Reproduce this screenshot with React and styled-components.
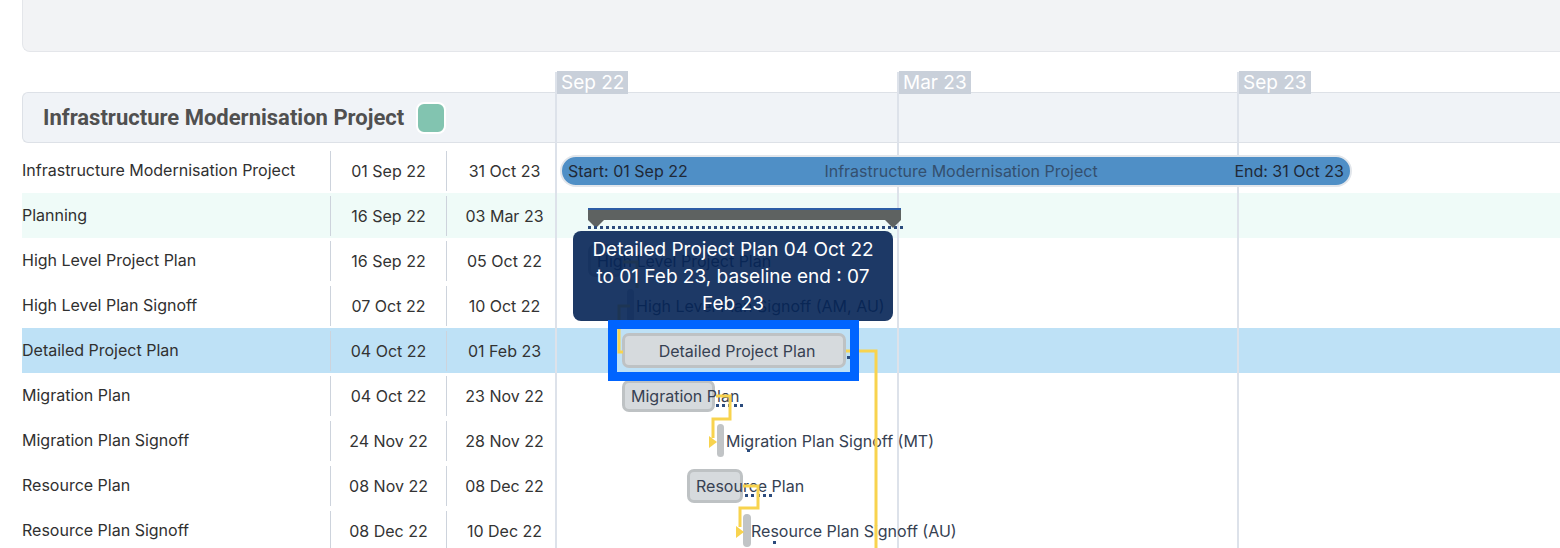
import React from "react"
import styled, { createGlobalStyle } from "styled-components"

// chart canvas origin on the page: the Sep 22 gridline and the top of the scale labels
const X0 = 556
const Y0 = 72

const GlobalStyle = createGlobalStyle`
  html, body {
    margin: 0;
    padding: 0;
    background: #fff;
  }
  body {
    font-family: Inter, "Noto Sans", sans-serif;
    color: #303030;
    overflow: hidden;
  }
`

const Page = styled.div`
  width: 1560px;
  height: 548px;
  overflow: hidden;
  padding-left: 22px;
  box-sizing: border-box;
`

const FilterPanel = styled.div`
  height: 52px;
  margin-right: -12px;
  box-sizing: border-box;
  background: #f2f3f5;
  border: 1px solid #e4e6ea;
  border-top: none;
  border-right: none;
  border-bottom-left-radius: 8px;
`

const Gantt = styled.section`
  position: relative;
  margin-top: 40px;
`

const GroupHeader = styled.div`
  height: 51px;
  box-sizing: border-box;
  margin-right: -12px;
  display: flex;
  align-items: center;
  gap: 12px;
  padding-left: 20px;
  background: #f0f3f7;
  border: 1px solid #dde1e7;
  border-right: none;
  border-radius: 6px 0 0 6px;
`

const Title = styled.h2`
  margin: 0;
  font-family: Roboto, Inter, sans-serif;
  font-weight: 700;
  font-size: 22px;
  color: #505050;
`

const Badge = styled.span`
  width: 26px;
  height: 28px;
  border-radius: 8px;
  background: #82c4b0;
  border: 2px solid #fff;
`

/* scale: gridlines and month labels, painted over the row backgrounds */
const Scale = styled.div`
  position: absolute;
  left: ${X0 - 22}px;
  top: -20px;
  right: 0;
  bottom: 0;
`

const GridLine = styled.div`
  position: absolute;
  top: 0;
  bottom: 0;
  width: 2px;
  left: ${(p) => p.$x - 1}px;
  background: #dde2ea;
`

const ScaleLabel = styled.span`
  position: absolute;
  top: -1px;
  left: ${(p) => p.$x + 1}px;
  padding: 0 4px;
  height: 23px;
  line-height: 23px;
  background: #c9d0da;
  color: #fff;
  font-size: 19px;
`

const Rows = styled.div`
  margin-top: 5px;
  margin-right: -12px;
`

const rowTones = {
  plain: "transparent",
  summary: "#effbf8",
  selected: "#bee1f6",
}

const Row = styled.div`
  display: grid;
  grid-template-columns: 308px 116px 110px 1fr;
  height: 45px;
  background: ${(p) => rowTones[p.$tone]};
  font-size: 16px;
`

const NameCell = styled.div`
  display: flex;
  align-items: center;
  padding-bottom: 1px;
  white-space: nowrap;
`

const DateCell = styled.div`
  display: flex;
  align-items: center;
  justify-content: center;
  margin: 3px 0 2px;
  padding-left: ${(p) => p.$pad || 0}px;
  padding-bottom: 1px;
  border-left: 1px solid #cdd3dc;
  color: #333;
`

const Timeline = styled.div`
  position: relative;
  display: flex;
  align-items: center;
  min-width: 0;
  white-space: nowrap;
`

const ProjectBar = styled.div`
  flex: none;
  margin-left: ${(p) => p.$x}px;
  width: ${(p) => p.$w}px;
  height: 32px;
  box-sizing: border-box;
  display: flex;
  align-items: center;
  justify-content: space-between;
  padding: 0 6px;
  background: #4f8fc6;
  border: 2px solid #e2e6eb;
  border-radius: 16px;
  color: #1f2937;
`

const ProjectName = styled.span`
  color: #34506f;
`

const SummaryBar = styled.div`
  flex: none;
  position: relative;
  align-self: flex-start;
  margin-top: 15px;
  margin-left: ${(p) => p.$x}px;
  width: ${(p) => p.$w}px;
  height: 12px;
  box-sizing: border-box;
  background: #5e6261;
  border-top: 2px solid #2d5da5;

  &::before,
  &::after {
    content: "";
    position: absolute;
    bottom: -8px;
    border-left: 8px solid transparent;
    border-right: 8px solid transparent;
    border-top: 8px solid #5e6261;
  }
  &::before {
    left: 0;
  }
  &::after {
    right: 0;
  }
`

const TaskBar = styled.div`
  flex: none;
  position: relative;
  margin-left: ${(p) => p.$x}px;
  width: ${(p) => p.$w}px;
  height: ${(p) => p.$h}px;
  box-sizing: border-box;
  display: flex;
  align-items: center;
  justify-content: ${(p) => (p.$center ? "center" : "flex-start")};
  padding-left: 6px;
  background: #d6dadd;
  border: 3px solid #bec2c4;
  border-radius: 7px;
  color: #364152;
`

const Milestone = styled.div`
  flex: none;
  position: relative;
  margin-left: ${(p) => p.$x}px;
  width: ${(p) => p.$w}px;
  height: 33px;
  background: #c1c4c6;
  border-radius: 4px;
`

const MilestoneLabel = styled.span`
  margin-left: ${(p) => p.$gap}px;
  color: #364152;
`

/* dotted baseline marker, placed from the bar it belongs to */
const Baseline = styled.span`
  position: absolute;
  left: ${(p) => p.$left}px;
  top: ${(p) => p.$top}px;
  width: ${(p) => p.$w}px;
  height: 3px;
  background: repeating-linear-gradient(90deg, #2b4b7d 0 3px, transparent 3px 6px);
`

/* links, tooltip and selection lie over the rows */
const Overlay = styled.div`
  position: absolute;
  left: ${X0 - 22}px;
  top: -20px;
  right: 0;
  bottom: 0;
  pointer-events: none;
`

const Links = styled.svg`
  position: absolute;
  left: 0;
  top: 0;
  overflow: visible;
`

const Tooltip = styled.div`
  position: absolute;
  left: ${573 - X0}px;
  top: ${231 - Y0}px;
  width: 320px;
  height: 90px;
  box-sizing: border-box;
  padding: 5px 15px 4px;
  background: rgba(4, 36, 85, 0.9);
  border-radius: 8px;
  color: #fff;
  font-size: 19px;
  line-height: 27px;
  text-align: center;
`

const SelectionFrame = styled.div`
  position: absolute;
  left: ${608 - X0}px;
  top: ${320 - Y0}px;
  width: 251px;
  height: 61px;
  box-sizing: border-box;
  border: 9px solid #0064ff;
`

const rows = [
  {
    name: "Infrastructure Modernisation Project",
    start: "01 Sep 22",
    end: "31 Oct 23",
    tone: "plain",
    bar: { kind: "project", x: 4, w: 792 },
  },
  {
    name: "Planning",
    start: "16 Sep 22",
    end: "03 Mar 23",
    tone: "summary",
    bar: { kind: "summary", x: 32, w: 313, base: { left: 0, top: 16, w: 318 } },
  },
  {
    name: "High Level Project Plan",
    start: "16 Sep 22",
    end: "05 Oct 22",
    tone: "plain",
    bar: { kind: "task", x: 32, w: 35, h: 33 },
  },
  {
    name: "High Level Plan Signoff",
    start: "07 Oct 22",
    end: "10 Oct 22",
    tone: "plain",
    bar: { kind: "milestone", x: 71, w: 7, gap: 2, label: "High Level Plan Signoff (AM, AU)" },
  },
  {
    name: "Detailed Project Plan",
    start: "04 Oct 22",
    end: "01 Feb 23",
    tone: "selected",
    bar: { kind: "task", x: 66, w: 224, h: 35, center: true, base: { left: 222, top: 20, w: 3 } },
  },
  {
    name: "Migration Plan",
    start: "04 Oct 22",
    end: "23 Nov 22",
    tone: "plain",
    bar: { kind: "task", x: 66, w: 93, h: 32, base: { left: 91, top: 21, w: 30 } },
  },
  {
    name: "Migration Plan Signoff",
    start: "24 Nov 22",
    end: "28 Nov 22",
    tone: "plain",
    bar: {
      kind: "milestone",
      x: 161,
      w: 7,
      gap: 2,
      label: "Migration Plan Signoff (MT)",
      base: { left: 30, top: 25, w: 6 },
    },
  },
  {
    name: "Resource Plan",
    start: "08 Nov 22",
    end: "08 Dec 22",
    tone: "plain",
    bar: { kind: "task", x: 131, w: 56, h: 34, base: { left: 55, top: 22, w: 28 } },
  },
  {
    name: "Resource Plan Signoff",
    start: "08 Dec 22",
    end: "10 Dec 22",
    tone: "plain",
    bar: {
      kind: "milestone",
      x: 187,
      w: 8,
      gap: 0,
      label: "Resource Plan Signoff (AU)",
      base: { left: 30, top: 27, w: 6 },
    },
  },
]

const months = [
  { label: "Sep 22", x: 0 },
  { label: "Mar 23", x: 342 },
  { label: "Sep 23", x: 682 },
]

// dependency links, in page pixels
const links = [
  "M623 262 H637 V288",
  "M630 306 H619 V352 H623",
  "M846 351 H876 V560",
  "M716 396 H730 V419 H713 V438",
  "M743 486 H758 V508 H740 V527",
]

const arrows = ["709,436 717,442 709,448", "736,526 744,532 736,538"]

const Mark = ({ base }) => (base ? <Baseline $left={base.left} $top={base.top} $w={base.w} /> : null)

const TimelineItem = ({ name, bar }) => {
  if (bar.kind === "project")
    return (
      <ProjectBar $x={bar.x} $w={bar.w}>
        <span>Start: 01 Sep 22</span>
        <ProjectName>{name}</ProjectName>
        <span>End: 31 Oct 23</span>
      </ProjectBar>
    )
  if (bar.kind === "summary")
    return (
      <SummaryBar $x={bar.x} $w={bar.w}>
        <Mark base={bar.base} />
      </SummaryBar>
    )
  if (bar.kind === "milestone")
    return (
      <>
        <Milestone $x={bar.x} $w={bar.w}>
          <Mark base={bar.base} />
        </Milestone>
        <MilestoneLabel $gap={bar.gap}>{bar.label}</MilestoneLabel>
      </>
    )
  return (
    <TaskBar $x={bar.x} $w={bar.w} $h={bar.h} $center={bar.center}>
      {name}
      <Mark base={bar.base} />
    </TaskBar>
  )
}

const App = () => (
  <Page>
    <GlobalStyle />
    <FilterPanel />
    <Gantt>
      <GroupHeader>
        <Title>Infrastructure Modernisation Project</Title>
        <Badge />
      </GroupHeader>

      <Scale>
        {months.map((m) => (
          <GridLine key={m.label} $x={m.x} />
        ))}
        {months.map((m) => (
          <ScaleLabel key={m.label} $x={m.x}>
            {m.label}
          </ScaleLabel>
        ))}
      </Scale>

      <Rows>
        {rows.map((r) => (
          <Row key={r.name} $tone={r.tone}>
            <NameCell>{r.name}</NameCell>
            <DateCell>{r.start}</DateCell>
            <DateCell $pad={6}>{r.end}</DateCell>
            <Timeline>
              <TimelineItem name={r.name} bar={r.bar} />
            </Timeline>
          </Row>
        ))}
      </Rows>

      <Overlay>
        <Links width="1004" height="480">
          <g transform={`translate(${-X0} ${-Y0})`}>
            {links.map((d) => (
              <path key={d} d={d} fill="none" stroke="#f8d34e" strokeWidth="3" />
            ))}
            {arrows.map((p) => (
              <polygon key={p} points={p} fill="#f8d34e" />
            ))}
          </g>
        </Links>
        <Tooltip>Detailed Project Plan 04 Oct 22 to 01 Feb 23, baseline end : 07 Feb 23</Tooltip>
        <SelectionFrame />
      </Overlay>
    </Gantt>
  </Page>
)

export default App
